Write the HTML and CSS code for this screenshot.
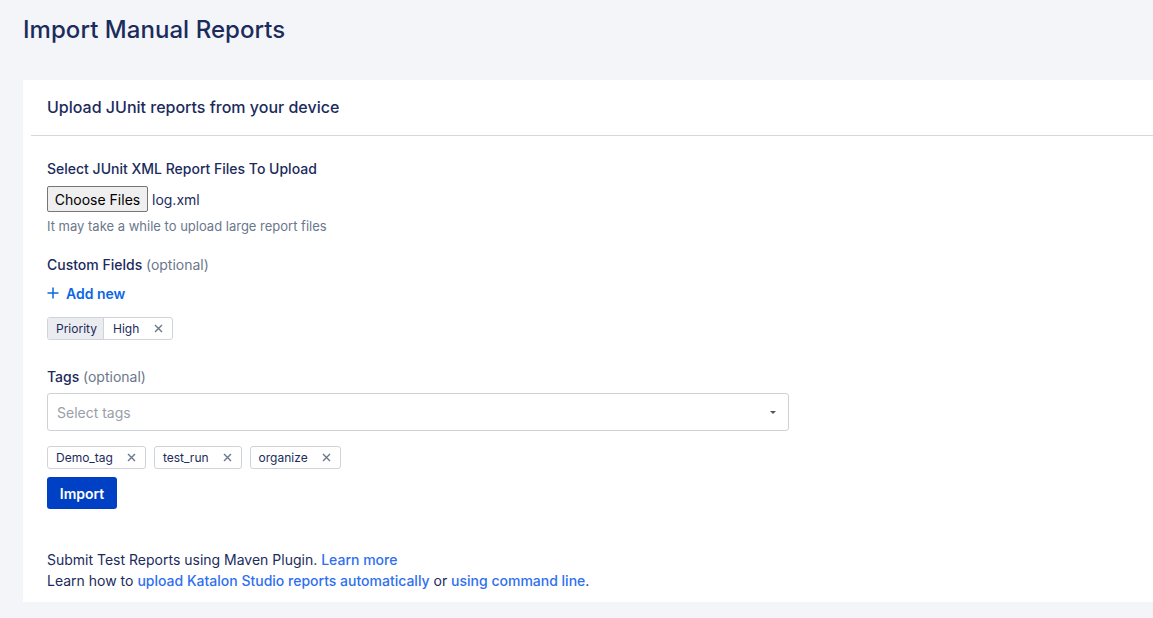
FILE: index.html
```html
<!DOCTYPE html>
<html>
<head>
<meta charset="utf-8">
<link rel="stylesheet" href="styles.css">
</head>
<body>
<div class="page">
  <h1 class="title">Import Manual Reports</h1>
  <div class="card">
    <div class="card-header">Upload JUnit reports from your device</div>
    <div class="divider"></div>
    <div class="card-body">
      <div class="label">Select JUnit XML Report Files To Upload</div>
      <div class="file-row">
        <button class="file-btn">Choose Files</button>
        <span class="file-name">log.xml</span>
      </div>
      <div class="help">It may take a while to upload large report files</div>

      <div class="label label-cf">Custom Fields <span class="opt">(optional)</span></div>
      <div class="add-new">
        <svg class="plus" width="12" height="12" viewBox="0 0 12 12"><path d="M6 0.5V11.5M0.5 6H11.5" stroke="#0c66e4" stroke-width="1.5" fill="none"/></svg>
        <span>Add new</span>
      </div>
      <div class="field-chip">
        <span class="field-key">Priority</span>
        <span class="field-val">High
          <svg class="x" width="9" height="9" viewBox="0 0 9 9"><path d="M1 1L8 8M8 1L1 8" stroke="#6b778c" stroke-width="1.4" fill="none"/></svg>
        </span>
      </div>

      <div class="label label-tags">Tags <span class="opt">(optional)</span></div>
      <div class="select">
        <span class="placeholder">Select tags</span>
        <span class="caret"></span>
      </div>
      <div class="tags">
        <span class="tag">Demo_tag<svg class="x" width="9" height="9" viewBox="0 0 9 9"><path d="M1 1L8 8M8 1L1 8" stroke="#6b778c" stroke-width="1.4" fill="none"/></svg></span>
        <span class="tag">test_run<svg class="x" width="9" height="9" viewBox="0 0 9 9"><path d="M1 1L8 8M8 1L1 8" stroke="#6b778c" stroke-width="1.4" fill="none"/></svg></span>
        <span class="tag">organize<svg class="x" width="9" height="9" viewBox="0 0 9 9"><path d="M1 1L8 8M8 1L1 8" stroke="#6b778c" stroke-width="1.4" fill="none"/></svg></span>
      </div>
      <button class="import-btn">Import</button>

      <div class="footer">
        <p>Submit Test Reports using Maven Plugin. <a href="#">Learn more</a></p>
        <p>Learn how to <a href="#">upload Katalon Studio reports automatically</a> or <a href="#">using command line</a>.</p>
      </div>
    </div>
  </div>
</div>
</body>
</html>
```
FILE: styles.css
```css
html, body {
  margin: 0;
  padding: 0;
  background: #f4f5f8;
  overflow: hidden;
  font-family: Inter, "Noto Sans", sans-serif;
  color: #1b2b5c;
}
.page {
  padding: 14px 0 0 23px;
}
.title {
  margin: 0;
  font-size: 24px;
  line-height: 32px;
  font-weight: 500;
  color: #1b2b5c;
  letter-spacing: 0.05px;
}
.card {
  margin-top: 34px;
  width: calc(100% + 20px);
  background: #fff;
  height: 522px;
  box-sizing: border-box;
}
.card-header {
  padding: 0 24px;
  line-height: 55px;
  height: 55px;
  font-size: 16px;
  font-weight: 500;
  color: #1b2b5c;
}
.divider {
  margin-left: 8px;
  height: 1px;
  background: #d6d8de;
}
.card-body {
  padding: 23px 24px 0 24px;
}
.label {
  font-size: 14px;
  line-height: 20px;
  font-weight: 500;
  color: #1b2b5c;
}
.opt {
  font-weight: 400;
  color: #6b778c;
}
.file-row {
  margin-top: 7px;
  display: flex;
  align-items: center;
  height: 26px;
}
.file-btn {
  height: 26px;
  box-sizing: border-box;
  padding: 0;
  width: 101px;
  white-space: nowrap;
  font-family: Inter, "Noto Sans", sans-serif;
  font-size: 14px;
  color: #000;
  background: #efefef;
  border: 1px solid #767676;
  border-radius: 2px;
}
.file-name {
  margin-left: 4px;
  font-size: 14px;
  color: #1b2b5c;
}
.help {
  margin-top: 6px;
  font-size: 13px;
  line-height: 16px;
  color: #6b778c;
}
.label-cf {
  margin-top: 21px;
}
.add-new {
  margin-top: 8px;
  display: flex;
  align-items: center;
  height: 20px;
  font-size: 14px;
  font-weight: 600;
  color: #0c66e4;
}
.plus {
  margin-right: 7px;
}
.field-chip {
  margin-top: 14px;
  display: inline-flex;
  height: 23px;
  box-sizing: border-box;
  border: 1px solid #cfd3da;
  border-radius: 3px;
  font-size: 12px;
  overflow: hidden;
  vertical-align: top;
}
.field-key {
  display: flex;
  align-items: center;
  padding: 0 6px 0 8px;
  background: #ebecf0;
  border-right: 1px solid #cfd3da;
  color: #1b2b5c;
}
.field-val {
  display: flex;
  align-items: center;
  padding: 0 9px 0 9px;
  color: #1b2b5c;
}
.field-val .x {
  margin-left: 15px;
}
.label-tags {
  margin-top: 27px;
}
.select {
  margin-top: 6px;
  width: 742px;
  height: 38px;
  box-sizing: border-box;
  border: 1px solid #cdd1d8;
  border-radius: 3px;
  display: flex;
  align-items: center;
  justify-content: space-between;
  padding: 0 12px 0 9px;
}
.placeholder {
  font-size: 14px;
  color: #9aa0aa;
}
.caret {
  width: 0;
  height: 0;
  border-left: 3.5px solid transparent;
  border-right: 3.5px solid transparent;
  border-top: 3.5px solid #555;
}
.tags {
  margin-top: 15px;
  display: flex;
  gap: 8px;
}
.tag {
  display: inline-flex;
  align-items: center;
  height: 23px;
  box-sizing: border-box;
  padding: 0 9px 0 8px;
  border: 1px solid #cfd3da;
  border-radius: 3px;
  font-size: 12px;
  color: #1b2b5c;
}
.tag .x {
  margin-left: 14px;
}
.import-btn {
  display: block;
  margin-top: 8px;
  width: 70px;
  height: 32px;
  border: none;
  border-radius: 3px;
  background: #0040c4;
  color: #fff;
  font-family: Inter, "Noto Sans", sans-serif;
  font-size: 14px;
  font-weight: 600;
}
.footer {
  margin-top: 40px;
  font-size: 14px;
  line-height: 21px;
  color: #1b2b5c;
}
.footer p {
  margin: 0;
}
.footer a {
  color: #2f6ff0;
  font-weight: 500;
  text-decoration: none;
}
```
